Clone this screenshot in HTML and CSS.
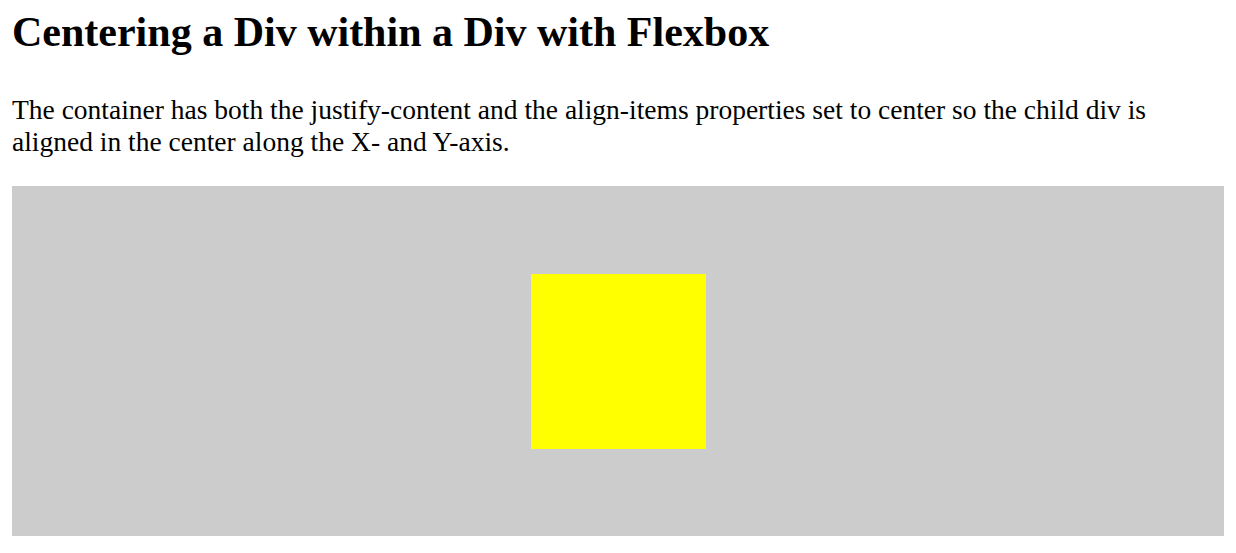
FILE: index.html
```html
<!DOCTYPE html>
<html>
<head>
<meta charset="utf-8">
<link rel="stylesheet" href="styles.css">
</head>
<body>
<h1 class="title">Centering a Div within a Div with Flexbox</h1>
<p class="intro">The container has both the justify-content and the align-items properties set to center so the child div is aligned in the center along the X- and Y-axis.</p>
<div class="container">
  <div class="child"></div>
</div>
</body>
</html>
```

FILE: styles.css
```css
body {
  margin: 12px;
  font-family: "Liberation Serif", "Times New Roman", serif;
  color: #000;
  background: #fff;
}
.title {
  font-size: 42px;
  font-weight: bold;
  margin: 0 0 42px 0;
  line-height: 40px;
}
.intro {
  font-size: 27.5px;
  line-height: 32px;
  margin: 0 0 28px 0;
}
.container {
  display: flex;
  justify-content: center;
  align-items: center;
  height: 350px;
  background: #cccccc;
}
.child {
  width: 175px;
  height: 175px;
  background: #ffff00;
}
```
